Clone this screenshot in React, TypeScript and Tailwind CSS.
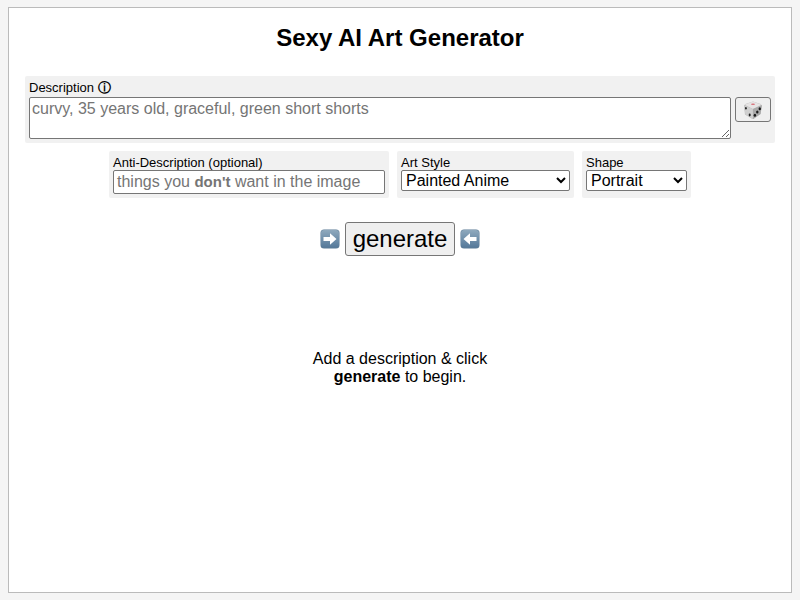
import { useState, type ReactNode } from 'react';

const ART_STYLES = ['Painted Anime', 'Casual Photo', 'Cinematic', 'Digital Painting', 'Concept Art'];
const SHAPES = ['Portrait', 'Square', 'Landscape'];

const controlClass = 'border border-[#767676] rounded-[2px] bg-white text-base text-black';

function Field({ id, label, children }: { id: string; label: string; children: ReactNode }) {
  return (
    <div className="flex flex-col items-start rounded-[2px] bg-[#f1f1f1] p-1">
      <label htmlFor={id} className="text-[13px] leading-[15px]">{label}</label>
      {children}
    </div>
  );
}

function Dice() {
  return (
    <svg viewBox="0 0 20 20" className="h-5 w-5" aria-hidden="true">
      <path d="M10 1.5 17.5 4 19 5.5 17.5 14 10.5 19 9.5 19 2 14.5 1 5.5 2.5 4Z" fill="#b9b9b9" />
      <path d="M10 1.5 18.5 4.8 10 9 1.5 4.8Z" fill="#e6e4e4" />
      <path d="M1.2 5.2 9.8 9 10 19 2.3 14.5Z" fill="#cfcfcf" />
      <path d="M10 9 18.9 5.2 17.5 14 10 19Z" fill="#a9a9a9" />
      <ellipse cx="10" cy="4.3" rx="2" ry=".8" fill="#d96f78" />
      <ellipse cx="2.9" cy="8.3" rx=".9" ry="1.3" fill="#222" />
      <ellipse cx="6.7" cy="15" rx="1" ry="1.4" fill="#222" />
      <ellipse cx="16.8" cy="8.7" rx="1.2" ry="1.5" fill="#1a1a1a" />
      <ellipse cx="14.3" cy="12" rx="1.2" ry="1.5" fill="#1a1a1a" />
      <ellipse cx="11.9" cy="15.3" rx="1.2" ry="1.5" fill="#1a1a1a" />
    </svg>
  );
}

function Arrow({ flip = false }: { flip?: boolean }) {
  return (
    <svg viewBox="0 0 20 20" className={flip ? 'h-5 w-5 -scale-x-100' : 'h-5 w-5'} aria-hidden="true">
      <defs>
        <linearGradient id={flip ? 'left' : 'right'} x1="0" y1="0" x2="0" y2="1">
          <stop offset="0" stopColor="#8fa9bd" />
          <stop offset="1" stopColor="#55799a" />
        </linearGradient>
      </defs>
      <rect x=".5" y=".5" width="19" height="19" rx="3.5" fill="#5b7b96" />
      <rect x="1" y="1" width="18" height="17.5" rx="3" fill={flip ? 'url(#left)' : 'url(#right)'} />
      <path d="M3.5 8.1H10V4.3L16.5 10 10 15.7V11.9H3.5Z" fill="#fff" />
    </svg>
  );
}

export default function App() {
  const [description, setDescription] = useState('');
  const [antiDescription, setAntiDescription] = useState('');

  return (
    <div className="flex min-h-screen bg-[#f5f5f5] px-2 py-[7px] font-['Liberation_Sans',Arial,sans-serif] text-base text-black">
      <main className="flex-1 border border-[#bbbbbb] bg-white px-4 pt-4">
        <h1 className="text-center text-2xl leading-7 font-bold">Sexy AI Art Generator</h1>

        <div className="mt-6 rounded-[2px] bg-[#f1f1f1] p-1">
          <label htmlFor="description" className="block text-[13px] leading-[15px]">
            Description <span className="font-bold">ⓘ</span>
          </label>
          <div className="mt-0.5 flex items-start gap-1">
            <textarea
              id="description"
              value={description}
              onChange={(e) => setDescription(e.target.value)}
              placeholder="curvy, 35 years old, graceful, green short shorts"
              className={`${controlClass} h-[42px] flex-1 resize-y p-0.5 leading-[18px] placeholder:text-[#757575]`}
            />
            <button type="button" aria-label="Random description" className="flex h-[25px] w-9 items-center justify-center rounded-[3px] border border-[#767676] bg-[#efefef]">
              <Dice />
            </button>
          </div>
        </div>

        <div className="mt-2 flex flex-wrap justify-center gap-2">
          <Field id="anti" label="Anti-Description (optional)">
            <div className="relative">
              <input
                id="anti"
                type="text"
                value={antiDescription}
                onChange={(e) => setAntiDescription(e.target.value)}
                className={`${controlClass} block h-6 w-68 px-[3px]`}
              />
              {/* a native placeholder can't hold bold text */}
              {antiDescription === '' && (
                <span className="pointer-events-none absolute inset-0 px-1 leading-6 whitespace-nowrap text-[#757575]">
                  things you <b className="text-[15px]">don't</b> want in the image
                </span>
              )}
            </div>
          </Field>
          <Field id="style" label="Art Style">
            <select id="style" className={`${controlClass} h-[21px] w-[169px] leading-[18px]`}>
              {ART_STYLES.map((s) => (
                <option key={s}>{s}</option>
              ))}
            </select>
          </Field>
          <Field id="shape" label="Shape">
            <select id="shape" className={`${controlClass} h-[21px] w-[101px] leading-[18px]`}>
              {SHAPES.map((s) => (
                <option key={s}>{s}</option>
              ))}
            </select>
          </Field>
        </div>

        <div className="mt-6 flex items-center justify-center gap-[5px]">
          <Arrow />
          <button type="button" className="h-[34px] w-[110px] rounded-[3px] border border-[#767676] bg-[#efefef] text-2xl leading-7">
            generate
          </button>
          <Arrow flip />
        </div>

        <p className="mx-auto mt-[94px] w-50 text-center leading-[18px]">
          Add a description &amp; click <b>generate</b> to begin.
        </p>
      </main>
    </div>
  );
}
